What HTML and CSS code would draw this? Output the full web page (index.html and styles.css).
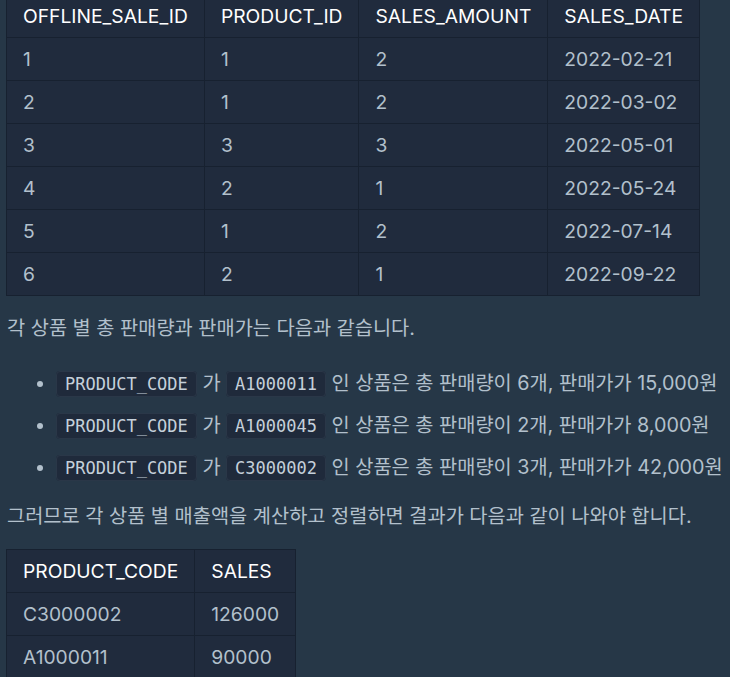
FILE: index.html
```html
<!DOCTYPE html>
<html lang="ko">
<head>
<meta charset="utf-8">
<link rel="stylesheet" href="styles.css">
</head>
<body>
<div class="content">
  <table class="data t1">
    <thead>
      <tr><th>OFFLINE_SALE_ID</th><th>PRODUCT_ID</th><th>SALES_AMOUNT</th><th>SALES_DATE</th></tr>
    </thead>
    <tbody>
      <tr><td>1</td><td>1</td><td>2</td><td>2022-02-21</td></tr>
      <tr><td>2</td><td>1</td><td>2</td><td>2022-03-02</td></tr>
      <tr><td>3</td><td>3</td><td>3</td><td>2022-05-01</td></tr>
      <tr><td>4</td><td>2</td><td>1</td><td>2022-05-24</td></tr>
      <tr><td>5</td><td>1</td><td>2</td><td>2022-07-14</td></tr>
      <tr><td>6</td><td>2</td><td>1</td><td>2022-09-22</td></tr>
    </tbody>
  </table>
  <p class="para p1">각 상품 별 총 판매량과 판매가는 다음과 같습니다.</p>
  <ul class="list">
    <li><code>PRODUCT_CODE</code> 가 <code>A1000011</code> 인 상품은 총 판매량이 6개, 판매가가 15,000원</li>
    <li><code>PRODUCT_CODE</code> 가 <code>A1000045</code> 인 상품은 총 판매량이 2개, 판매가가 8,000원</li>
    <li><code>PRODUCT_CODE</code> 가 <code>C3000002</code> 인 상품은 총 판매량이 3개, 판매가가 42,000원</li>
  </ul>
  <p class="para p2">그러므로 각 상품 별 매출액을 계산하고 정렬하면 결과가 다음과 같이 나와야 합니다.</p>
  <table class="data t2">
    <thead>
      <tr><th>PRODUCT_CODE</th><th>SALES</th></tr>
    </thead>
    <tbody>
      <tr><td>C3000002</td><td>126000</td></tr>
      <tr><td>A1000011</td><td>90000</td></tr>
    </tbody>
  </table>
</div>
</body>
</html>
```
FILE: styles.css
```css
html, body {
  margin: 0;
  padding: 0;
  background: #263747;
  height: 100%;
  overflow: hidden;
}
body {
  font-family: Inter, "Noto Sans CJK KR", sans-serif;
  color: #b2c0cc;
  font-size: 19.75px;
}
.content {
  padding: 0 0 0 6px;
  margin-top: -6px;
}
.data {
  border-collapse: collapse;
  background: #202b3d;
  white-space: nowrap;
  font-size: 19.25px;
}
.data th, .data td {
  border: 1px solid #172130;
  padding: 0 16px;
  height: 42px;
  text-align: left;
  font-weight: 400;
  line-height: 26px;
}
.data th {
  color: #ffffff;
}
.para {
  margin: 0 0 0 1px;
  height: 28px;
  line-height: 28px;
  white-space: nowrap;
}
.p1 {
  margin-top: 18px;
}
.p2 {
  margin-top: 21px;
}
.list {
  margin: 27px 0 0 0;
  padding: 0 0 0 50px;
  white-space: nowrap;
}
.list li {
  height: 28px;
  line-height: 28px;
}
.list li + li {
  margin-top: 14px;
}
code {
  font-family: "DejaVu Sans Mono", monospace;
  font-size: 17px;
  line-height: 20px;
  background: #1f2a3b;
  border: 1px solid #2a3748;
  border-radius: 4px;
  padding: 2px 8px;
  color: #c5d0da;
}
.t2 {
  margin-top: 19px;
}
```
